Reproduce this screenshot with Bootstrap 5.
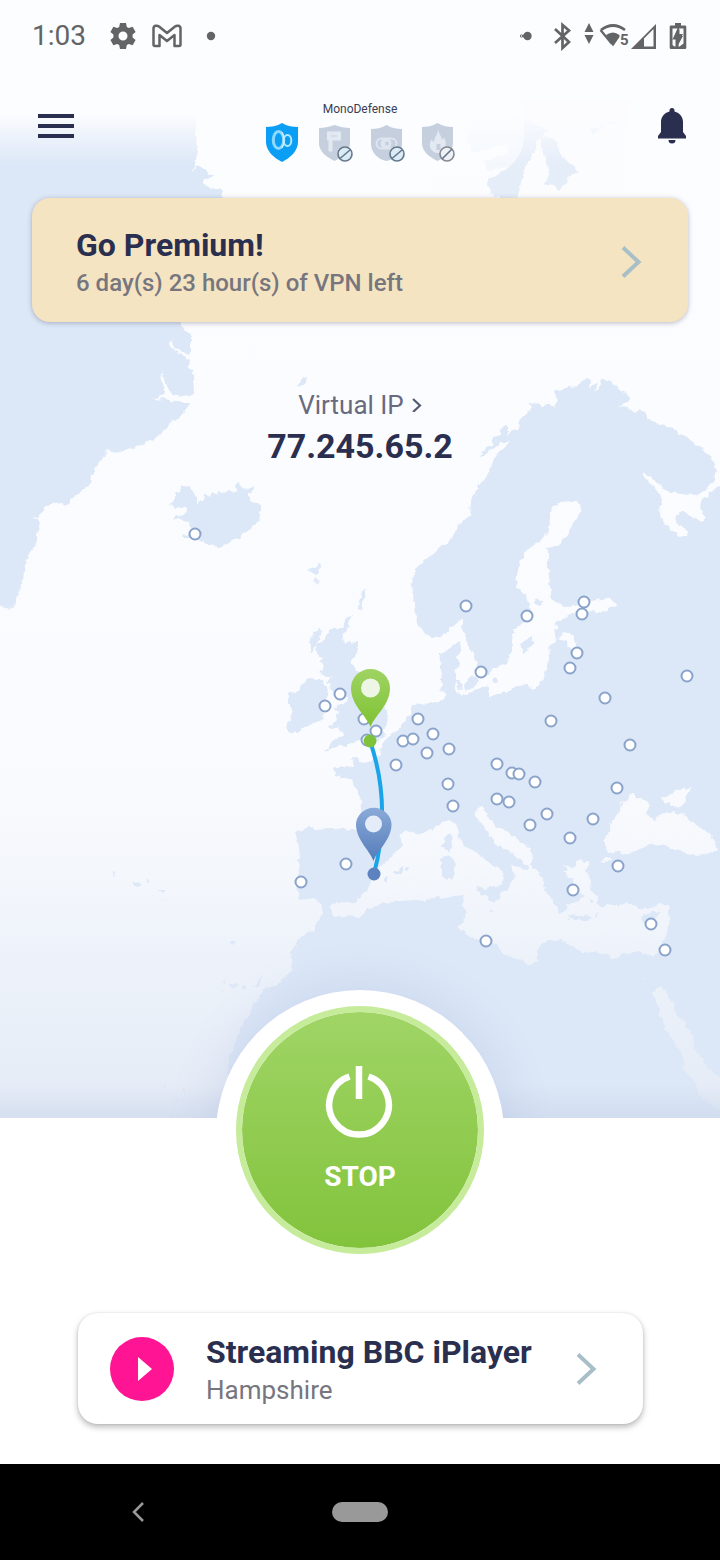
<!DOCTYPE html>
<html lang="en">
<head>
<meta charset="utf-8">
<meta name="viewport" content="width=device-width, initial-scale=1">
<title>VPN</title>
<link href="https://cdn.jsdelivr.net/npm/bootstrap@5.3.0/dist/css/bootstrap.min.css" rel="stylesheet">
<style>
  :root { --ink: #2b2f4f; --soft: #77767e; --chevron: #a9bfc8; }
  body { font-family: Roboto, "Noto Sans", sans-serif; color: var(--ink); background: #fff; }
  svg { display: block; flex: none; }
  .stage { background: #fbfcff; overflow: hidden; }
  .stage::after {
    content: ""; position: absolute; left: 50%; bottom: -160px; width: 288px; height: 288px;
    margin-left: -144px; border-radius: 50%; background: #fff; box-shadow: 0 0 48px rgba(130, 145, 200, .24);
  }
  .world { position: absolute; inset: 0; width: 100%; height: 100%; }
  .statusbar { height: 72px; padding: 0 32px; color: #636466; }
  .clock { font-size: 28px; line-height: 32px; }
  .topbar { height: 96px; padding: 0 32px; }
  .topbar .btn { width: 48px; height: 48px; margin-top: 30px; }
  .defense { width: 328px; padding: 30px 0 12px; border-radius: 40px; background: rgba(252, 253, 255, .65); }
  .defense-title { font-size: 12px; line-height: 14px; margin-bottom: 6px; color: #3a3d55; }
  .premium { margin: 30px 32px 0; padding: 28px 44px 24px; background: #f4e4c2; border-radius: 18px; box-shadow: 0 1px 5px rgba(60, 60, 90, .35); }
  .title-lg { font-size: 32px; line-height: 38px; font-weight: 700; color: var(--ink); }
  .sub { font-size: 24px; line-height: 30px; margin-top: 4px; font-weight: 500; color: var(--soft); }
  .vip { margin-top: 66px; }
  .vip-label { font-size: 26px; line-height: 34px; color: #686b80; }
  .vip-address { font-size: 34px; line-height: 48px; font-weight: 700; }
  .stop-btn {
    width: 248px; height: 248px; margin-top: -112px; padding-top: 54px; border: 6px solid #c5eb9b;
    background: linear-gradient(#a0d566, #82c33c) padding-box; color: #fff; z-index: 1;
  }
  .stop-label { font-size: 28px; line-height: 34px; font-weight: 700; margin-top: 20px; }
  .server { margin: 59px 77px 40px 78px; padding: 20px 44px 19px 32px; border-radius: 20px; background: #fff; box-shadow: 0 3px 6px rgba(0, 0, 0, .28), 0 0 2px rgba(0, 0, 0, .12); }
  .server .sub { font-size: 26px; font-weight: 400; }
  .navkeys { height: 96px; background: #000; }
  .back-key { margin-left: 36px; }
  .home-key { width: 56px; height: 20px; background: #999; }
</style>
</head>
<body>
<div class="d-flex flex-column min-vh-100">

  <section class="stage position-relative flex-grow-1" aria-label="Server map">
    <svg class="world" viewBox="0 0 720 1118" preserveAspectRatio="xMidYMin slice" aria-hidden="true">
      <defs>
        <linearGradient id="sea" gradientUnits="userSpaceOnUse" x1="0" y1="0" x2="0" y2="1118">
          <stop offset="0" stop-color="#fcfdff"/><stop offset=".68" stop-color="#fafbfe"/>
          <stop offset=".78" stop-color="#f4f7fc"/><stop offset=".86" stop-color="#edf2fa"/><stop offset="1" stop-color="#e4ebf6"/>
        </linearGradient>
        <linearGradient id="haze" x1="0" y1="0" x2="0" y2="1">
          <stop offset="0" stop-color="#fcfdff"/><stop offset=".68" stop-color="#fcfdff"/><stop offset="1" stop-color="#fcfdff" stop-opacity="0"/>
        </linearGradient>
        <linearGradient id="foot" x1="0" y1="0" x2="0" y2="1">
          <stop offset="0" stop-color="#c9d5ea" stop-opacity="0"/><stop offset="1" stop-color="#c9d5ea" stop-opacity=".55"/>
        </linearGradient>
        <linearGradient id="gpin" x1="0" y1="0" x2="0" y2="1"><stop offset="0" stop-color="#9fd363"/><stop offset="1" stop-color="#7fc234"/></linearGradient>
        <linearGradient id="bpin" x1="0" y1="0" x2="0" y2="1"><stop offset="0" stop-color="#8aaad8"/><stop offset="1" stop-color="#557cba"/></linearGradient>
        <!-- roughens the coastlines -->
        <filter id="coast" filterUnits="userSpaceOnUse" x="-20" y="-20" width="760" height="1160" color-interpolation-filters="sRGB">
          <feTurbulence type="fractalNoise" baseFrequency=".16" numOctaves="2" seed="4"/>
          <feDisplacementMap in="SourceGraphic" scale="6" xChannelSelector="R" yChannelSelector="G"/>
        </filter>
      </defs>
      <rect width="720" height="1118" fill="url(#sea)"/>

      <g filter="url(#coast)">
      <g fill="#dce7f7">
        <!-- Greenland -->
        <path d="M-10 90H200L196 130 198 150 193 172 198 165 205 170 213 177 205 178 203 184 209 188 216 187 221 191 222 198 222 250 180 322 184 330 191 335 191 352 189 355 176 348 170 340 169 344 177 352 190 360 188 367 193 370 194 395 183 397 172 395 166 384 166 379 161 372 161 382 165 388 163 395 152 400 165 399 176 402 191 402 186 410 174 420 160 434 152 441 138 446 120 452 112 453 106 448 107 454 99 462 96 468 91 480 86 488 76 495 69 502 66 506 62 503 45 505 45 510 40 514 38 517 34 516 41 524 37 533 37 541 33 549 26 559 25 570 22 578 20 590 16 598 16 604 10 609 5 607 -10 602Z"/>
        <!-- Iceland -->
        <path d="M169 505 172 501 175 499 175 493 180 491 182 485 186 485 190 488 194 491 197 497 197 506 200 501 203 502 204 493 207 496 210 498 212 492 217 495 218 491 223 493 229 492 233 493 236 490 235 485 239 483 243 489 247 490 253 486 252 491 248 494 251 502 257 503 261 507 261 515 258 522 252 528 245 531 238 538 232 540 224 545 218 547 208 545 203 542 193 538 184 538 183 532 188 535 193 529 190 527 188 521 179 519 173 521 173 517 180 515 187 512 183 507 176 508Z"/>
        <!-- Faroe, Shetland, Hebrides -->
        <path d="M310 569 316 566 317 562 320 567 319 573 316 575 310 571ZM315 577 319 580 318 584 314 580ZM359 600 362 592 366 591 366 597 362 604 361 611 358 608ZM310 640 315 632 321 629 322 634 317 642 314 650 309 655 311 646ZM297 385 303 378 308 377 305 383 298 387Z"/>
        <!-- Great Britain and Ireland -->
        <path d="M330 628 343 628 346 616 353 615 349 623 344 634 341 641 346 643 358 642 358 650 351 664 354 668 361 671 367 686 374 697 377 703 385 707 388 714 387 723 382 730 386 735 378 740 365 742 353 742 345 747 338 746 325 751 331 743 341 736 345 734 338 728 328 727 336 721 338 712 333 707 344 704 347 698 339 692 332 690 328 683 332 676 325 676 318 673 324 667 319 662 324 657 317 655 316 644 324 640Z"/>
        <path d="M302 684 310 678 322 679 328 690 325 703 322 720 311 724 297 733 289 732 286 726 293 712 288 706 288 693 299 692Z"/>
        <!-- Continent and Africa -->
        <path d="M587 378 591 380 590 390 583 402 593 385 597 382 594 392 598 391 601 380 607 380 616 386 624 392 630 399 628 402 618 407 626 406 636 414 638 408 644 412 647 419 655 423 665 425 675 430 687 437 695 444 703 450 711 456 716 468 714 480 708 489 700 494 687 495 670 492 660 486 651 478 642 473 648 482 659 491 662 500 660 510 663 522 672 530 680 537 686 535 687 530 678 525 675 515 682 511 693 518 702 522 706 517 700 507 702 500 708 495 716 488 730 478V1130H228V1060L236 1040 240 1028 250 1015 252 1003 259 1000 263 989 278 984 290 972 293 964 291 952 298 939 315 930 318 922 323 912 320 903 315 898 300 900 298 899 300 892 297 887 297 880 299 870 298 861 300 857 298 840 295 833 303 830 308 826 315 829 333 828 345 829 353 830 361 830 360 815 361 800 357 790 350 778 335 776 332 769 345 766 354 768 352 757 358 758 361 763 371 761 380 755 381 745 387 738 395 733 405 720 411 713 412 705 423 704 443 700 445 692 440 690 443 686 440 668 441 653 448 648 460 642 461 650 457 656 460 663 456 670 456 681 454 690 463 696 477 690 487 685 490 696 507 692 517 686 528 685 533 690 543 681 547 665 550 647 558 638 566 642 573 650 577 648 573 637 565 632 558 630 562 620 573 613 592 611 603 613 613 606 618 604 609 598 595 600 580 605 565 607 552 600 550 583 548 570 548 553 546 548 555 547 567 535 575 520 581 511 580 504 571 501 560 502 552 508 550 516 549 530 541 540 528 549 520 562 517 575 516 588 525 595 530 607 533 613 525 622 514 629 512 640 512 650 508 662 493 668 488 676 478 672 475 657 468 645 463 630 462 619 451 628 442 636 433 638 424 633 417 624 414 605 412 585 415 569 424 561 438 549 450 540 458 527 470 514 471 500 478 488 486 477 493 461 502 450 510 443 500 443 490 450 480 458 482 451 493 444 493 437 500 435 502 427 507 425 507 436 512 430 517 431 521 419 532 409 530 402 538 403 543 407 549 403 554 407 558 399 554 392 562 390 569 386 573 388Z"/>
        <!-- Arctic islands -->
        <path d="M463 127 470 119 520 118 550 130 537 140 534 153 527 162 522 180 517 198H495L488 187 488 178 500 173 508 167 487 172 484 160 498 157 508 152 506 144 486 150 473 152 467 140ZM541 137 552 138 558 143 560 154 568 162 579 171 572 175 565 183 559 191 554 185 545 184 550 172 546 160 541 147ZM591 129 604 125 597 132 592 135ZM608 124 618 121 616 124Z"/>
        <!-- Atlantic islands -->
        <path d="M133 882 139 882 142 885 137 887 133 884ZM145 880 150 881 147 883ZM157 890 165 890 164 893ZM113 872 116 873 114 876ZM164 899 166 900 164 901ZM229 942 236 942 233 945ZM222 979 226 982 223 984ZM229 985 238 982 240 985 231 988ZM242 985 247 988 243 990ZM252 986 257 983 262 975 261 981 256 987ZM222 989 225 990 223 991ZM163 1084 167 1086 164 1087ZM171 1089 174 1089ZM183 1086 185 1092 183 1095ZM175 1100 178 1102 176 1104ZM170 1103 172 1104 171 1105Z"/>
      </g>

      <g fill="url(#sea)">
        <path d="M330 906 338 903 356 902 361 897 367 890 372 880 380 867 393 855 403 845 399 835 406 830 420 835 427 832 435 828 441 823 449 820 456 824 459 832 457 837 465 845 473 851 481 856 490 863 500 869 505 878 503 884 495 886 486 888 477 886 475 891 485 896 493 903 499 901 500 893 508 890 511 883 514 875 511 865 519 867 527 872 528 866 519 860 511 852 503 848 495 842 488 833 482 823 476 817 475 811 480 806 485 810 487 817 497 826 507 832 518 840 530 848 533 855 531 865 536 870 543 879 544 890 550 896 555 904 560 913 568 911 565 905 570 903 579 900 584 896 575 889 572 878 562 873 569 871 562 865 574 867 579 860 585 862 589 861 586 872 591 880 590 889 598 897 595 903 602 908 607 904 618 906 627 902 640 908 651 908 660 904 669 905 668 914 670 921 665 938 658 951 653 955 645 955 638 952 625 953 615 959 605 954 593 953 582 952 572 946 560 941 547 940 538 948 537 962 531 965 520 960 503 954 497 945 485 940 475 939 459 928 458 925 464 922 466 912 461 905 464 895 454 896 446 898 434 897 426 901 415 900 401 901 384 903 368 909 360 917 347 916 334 916Z"/>
        <path d="M632 793 637 798 645 800 650 805 645 815 655 819 664 814 673 812 682 813 690 820 700 827 709 833 716 843 718 850 710 854 698 856 688 853 675 850 662 844 650 845 638 850 628 855 618 852 608 853 603 840 609 833 612 821 620 810 621 802 629 799ZM664 805 662 799 670 795 675 791 692 787 687 794 685 805 677 808 668 803ZM599 861 607 857 612 861 602 862Z"/>
        <path d="M653 992 662 987 672 1001 677 1014 688 1028 693 1036 695 1049 706 1064 730 1090V1120L708 1102 698 1095 697 1084 685 1071 681 1052 667 1032ZM644 977 646 979 645 981Z"/>
      </g>

      <g fill="#dce7f7">
        <path d="M444 840 451 833 452 848 448 853 443 847ZM441 858 448 855 455 860 453 878 446 881 441 874ZM384 878 388 877 386 884ZM394 872 402 867 402 873 396 875ZM404 868 409 868 407 871ZM567 915 578 916 592 917 587 921 569 919ZM640 918 648 913 661 911 652 922 645 923ZM520 643 532 636 534 641 529 649 523 655ZM533 603 538 597 543 602 540 606ZM554 623 563 620 567 624 560 629ZM553 630 563 629 562 636 556 639ZM463 683 473 674 479 680 472 690 466 691ZM456 680 460 680 463 688 458 689ZM492 679 497 678 498 682 494 683ZM594 915 597 913 598 917ZM590 898 593 900 590 902ZM489 910 493 909 494 912Z"/>
      </g>
      </g>

      <rect width="720" height="165" fill="url(#haze)"/>
      <rect x="430" y="100" width="200" height="98" fill="#fcfdff" opacity=".3"/>
      <rect y="1084" width="720" height="34" fill="url(#foot)"/>

      <path d="M370 741Q392 805 374 874" fill="none" stroke="#1aa5e8" stroke-width="4"/>
      <g fill="#fff" stroke="#8aa3cb" stroke-width="2">
        <circle cx="195" cy="534" r="5.500"/><circle cx="466" cy="606" r="5.500"/><circle cx="527" cy="616" r="5.500"/><circle cx="584" cy="602" r="5.500"/><circle cx="582" cy="614" r="5.500"/><circle cx="577" cy="653" r="5.500"/><circle cx="570" cy="668" r="5.500"/><circle cx="481" cy="672" r="5.500"/><circle cx="687" cy="676" r="5.500"/><circle cx="605" cy="698" r="5.500"/><circle cx="551" cy="721" r="5.500"/><circle cx="630" cy="745" r="5.500"/><circle cx="340" cy="694" r="5.500"/><circle cx="325" cy="706" r="5.500"/><circle cx="364" cy="719" r="5.500"/><circle cx="376" cy="731" r="5.500"/><circle cx="367" cy="740" r="5.500"/><circle cx="418" cy="719" r="5.500"/><circle cx="403" cy="741" r="5.500"/><circle cx="413" cy="739" r="5.500"/><circle cx="433" cy="734" r="5.500"/><circle cx="427" cy="753" r="5.500"/><circle cx="449" cy="749" r="5.500"/><circle cx="396" cy="765" r="5.500"/><circle cx="448" cy="784" r="5.500"/><circle cx="453" cy="806" r="5.500"/><circle cx="497" cy="764" r="5.500"/><circle cx="512" cy="773" r="5.500"/><circle cx="519" cy="774" r="5.500"/><circle cx="535" cy="782" r="5.500"/><circle cx="617" cy="788" r="5.500"/><circle cx="497" cy="799" r="5.500"/><circle cx="509" cy="802" r="5.500"/><circle cx="547" cy="814" r="5.500"/><circle cx="530" cy="825" r="5.500"/><circle cx="593" cy="819" r="5.500"/><circle cx="570" cy="838" r="5.500"/><circle cx="618" cy="866" r="5.500"/><circle cx="573" cy="890" r="5.500"/><circle cx="651" cy="924" r="5.500"/><circle cx="665" cy="950" r="5.500"/><circle cx="486" cy="941" r="5.500"/><circle cx="346" cy="864" r="5.500"/><circle cx="301" cy="882" r="5.500"/>
      </g>
      <circle cx="370" cy="741" r="6.500" fill="#7fc23c"/>
      <circle cx="374" cy="874" r="6.500" fill="#5c82bf"/>
      <path d="M370.500 727C366 715 351 705 351 688A19.500 19 0 0 1 390 688C390 705 375 715 370.500 727Z" fill="url(#gpin)"/>
      <circle cx="370.500" cy="688" r="9.500" fill="#edf6e4"/>
      <path d="M373.500 861C369 849 356 840 356 824A17.800 17.500 0 0 1 391.500 824C391.500 840 378 849 373.500 861Z" fill="url(#bpin)"/>
      <circle cx="373.500" cy="824" r="8.500" fill="#e3ecf8"/>
    </svg>

    <div class="position-relative d-flex flex-column">
      <div class="statusbar d-flex align-items-center justify-content-between">
        <div class="d-flex align-items-center">
          <span class="clock">1:03</span>
          <svg class="ms-4" width="26" height="26" viewBox="0 0 26 26" aria-hidden="true"><path fill="currentColor" fill-rule="evenodd" d="M10 0h6l.8 3.900 2 1.200L22.600 3.800 25.600 9l-3 2.600v2.800l3 2.600-3 5.200-3.800-1.300-2 1.200L16 26h-6l-.8-3.900-2-1.200-3.800 1.300-3-5.200 3-2.600v-2.800l-3-2.600 3-5.200 3.800 1.300 2-1.200zM13 8.500a4.500 4.500 0 1 0 0 9 4.500 4.500 0 0 0 0-9z"/></svg>
          <svg class="ms-3" width="30" height="24" viewBox="0 0 30 24" fill="none" stroke="currentColor" stroke-width="2.500" stroke-linejoin="round" aria-hidden="true"><path d="M3 22h4.500V11L15 17l7.500-6v11H27q1.500 0 1.500-1.500V4.500C28.500 1.500 25 1 23 2.500L15 9 7 2.500C5 1 1.500 1.500 1.500 4.500v16Q1.500 22 3 22z"/></svg>
          <svg class="ms-4" width="10" height="10" viewBox="0 0 10 10" aria-hidden="true"><circle cx="5" cy="5" r="4.200" fill="currentColor"/></svg>
        </div>
        <svg width="168" height="30" viewBox="0 0 168 30" fill="currentColor" role="img" aria-label="Bluetooth, Wi-Fi, mobile signal and battery">
          <circle cx="7.500" cy="15" r="4.200"/><circle cx="1.500" cy="15" r="1.200" fill="none" stroke="currentColor"/><circle cx="4" cy="15" r="1.500"/>
          <path d="M35 8 49 21 42.500 27V4L49 9.500 35 22" fill="none" stroke="currentColor" stroke-width="2.700"/>
          <path d="M69 2l4.500 9h-9zM64.500 14h9L69 23z"/>
          <path d="M81 9Q93 0 105 9" fill="none" stroke="currentColor" stroke-width="2.700"/><path d="M80.500 9 92 23" fill="none" stroke="currentColor" stroke-width="2.200"/><path d="M86 14q7-5 13.500 0v2l-6.500 9.500z"/>
          <text x="100" y="24" font-size="15" font-weight="700">5</text>
          <path fill-rule="evenodd" d="M136 3v25h-25zm-2.500 5-9.500 9.500v8h9.500z"/>
          <path fill-rule="evenodd" d="M155 2h6v2.500h4q1.300 0 1.300 1.300v21q0 1.200-1.300 1.200h-14q-1.300 0-1.300-1.200v-21q0-1.300 1.300-1.300h4zM152.500 7.500V24l2 1.500 1 0v-7h-3l5-11zM158.500 25.500h1l4-3V7.500h-4.500V13h4l-4.500 9z"/>
          <path d="M159.500 8 153.500 18h3.500v8l6-11h-3.500z"/>
        </svg>
      </div>

      <header class="topbar d-flex justify-content-between align-items-start">
        <button type="button" class="btn p-0 d-flex align-items-center justify-content-center" aria-label="Menu">
          <svg width="36" height="24" viewBox="0 0 36 24" fill="var(--ink)"><path d="M0 0h36v4H0zM0 10h36v4H0zM0 20h36v4H0z"/></svg>
        </button>
        <div class="defense d-flex flex-column align-items-center">
          <div class="defense-title">MonoDefense</div>
          <svg width="190" height="42" viewBox="0 0 190 42" role="img" aria-label="VPN on, other protection off">
            <path d="M17 1C22 4 28 5 33 5v15c0 9-8 16-16 20C9 36 1 29 1 20V5c5 0 11-1 16-4z" fill="#0b9ef5"/>
            <g fill="none"><ellipse cx="13.500" cy="18" rx="5.200" ry="8.500" stroke="#8ed9ff" stroke-width="3"/><ellipse cx="22.500" cy="18.500" rx="3.800" ry="5.500" stroke="#b5e8ff" stroke-width="2"/><path d="M17 10q4 8 0 16" stroke="#d7f4ff"/></g>
            <g fill="#c5cfdd"><path d="M69.500 3C75 5 80 6 85 6v15c0 9-8 14-15.500 18C62 35 54 30 54 21V6c5 0 10-1 15.500-3z"/><path d="M121.500 3C127 6 132 7 137 7v15c0 9-8 16-15.500 17C114 38 106 31 106 22V7c5 0 10-1 15.500-4z"/><path d="M172.500 1C178 4 183 5 188 5v16c0 9-8 14-15.500 18C165 35 157 30 157 21V5c5 0 10-1 15.500-4z"/></g>
            <path d="M64 11.500h10v5H64zM65.500 18.500v11" fill="none" stroke="#e2e9f2" stroke-width="4"/>
            <rect x="111.500" y="16.500" width="20" height="10" rx="5" fill="none" stroke="#dce5f0" stroke-width="2"/><circle cx="121" cy="21.500" r="5.500" fill="#dce5f0"/><circle cx="122" cy="21.500" r="2" fill="#c5cfdd"/>
            <path d="M173 7c1 6 4 7 4 11 2-1 2-3 2-3 4 8 1 16-6 16s-11-8-6-14c0 2 1 3 2 3 0-5 4-7 4-13zm-1.500 15v6h4v-6z" fill="#e2e9f2" fill-rule="evenodd"/>
            <g fill="#dcecf6" stroke="#66788b" stroke-width="1.600"><circle cx="80" cy="32" r="7"/><circle cx="132" cy="32" r="7"/><circle cx="182" cy="32" r="7" fill="#eef1f5" stroke="#85888f"/><path d="M75 36.500 85 28M127 36.500 137 28M177 37 187 27"/></g>
          </svg>
        </div>
        <button type="button" class="btn p-0 d-flex align-items-center justify-content-center" aria-label="Notifications">
          <svg class="ms-3" width="30" height="36" viewBox="0 0 30 36" fill="var(--ink)"><path d="M12.500 2.500a2.500 2.500 0 0 1 5 0v1C23 5 26 9 26 14v10l3 4v2.500H1V28l3-4V14c0-5 3-9 8.500-10.500zM11.500 32h7a3.500 3.500 0 0 1-7 0z"/></svg>
        </button>
      </header>

      <button type="button" class="premium btn text-start d-flex align-items-center justify-content-between border-0">
        <span>
          <span class="title-lg d-block">Go Premium!</span>
          <span class="sub d-block">6 day(s) 23 hour(s) of VPN left</span>
        </span>
        <svg width="24" height="34" viewBox="0 0 24 34" fill="none" stroke="var(--chevron)" stroke-width="4" aria-hidden="true"><path d="M3 2.500 18.500 17 3 31.500"/></svg>
      </button>

      <div class="vip text-center">
        <a href="#" class="vip-label text-decoration-none d-inline-flex align-items-center">Virtual IP
          <svg class="ms-2" width="10" height="14" viewBox="0 0 10 14" fill="none" stroke="#565a70" stroke-width="2.200" aria-hidden="true"><path d="M1 1l7 6.500L1 14"/></svg>
        </a>
        <div class="vip-address">77.245.65.2</div>
      </div>
    </div>
  </section>

  <section class="d-flex flex-column bg-white">
    <button type="button" class="stop-btn rounded-circle position-relative align-self-center d-flex flex-column align-items-center">
      <svg width="70" height="74" viewBox="0 0 70 74" fill="none" stroke="#fff" stroke-width="6.500" aria-hidden="true"><path d="M34 0v33"/><path d="M24.500 10.500a29.800 29.800 0 1 0 19 0"/></svg>
      <span class="stop-label">STOP</span>
    </button>

    <button type="button" class="server btn border-0 text-start d-flex align-items-center">
      <svg width="64" height="64" viewBox="0 0 64 64" aria-hidden="true"><circle cx="32" cy="32" r="32" fill="#ff1493"/><path d="M28 20v24l14-12z" fill="#fff"/></svg>
      <span class="flex-grow-1 ms-3 ps-3">
        <span class="title-lg d-block">Streaming BBC iPlayer</span>
        <span class="sub d-block">Hampshire</span>
      </span>
      <svg width="24" height="34" viewBox="0 0 24 34" fill="none" stroke="var(--chevron)" stroke-width="4" aria-hidden="true"><path d="M3 2.500 18.500 17 3 31.500"/></svg>
    </button>
  </section>

  <nav class="navkeys row g-0 align-items-center" aria-label="System navigation">
    <div class="col d-flex justify-content-center">
      <button type="button" class="back-key btn p-2 border-0" aria-label="Back"><svg width="14" height="22" viewBox="0 0 14 22" fill="none" stroke="#999" stroke-width="2.500"><path d="M12 2 3 11l9 9"/></svg></button>
    </div>
    <div class="col d-flex justify-content-center"><button type="button" class="home-key btn p-0 border-0 rounded-pill" aria-label="Home"></button></div>
    <div class="col"></div>
  </nav>
</div>
<script src="https://cdn.jsdelivr.net/npm/bootstrap@5.3.0/dist/js/bootstrap.bundle.min.js"></script>
</body>
</html>
